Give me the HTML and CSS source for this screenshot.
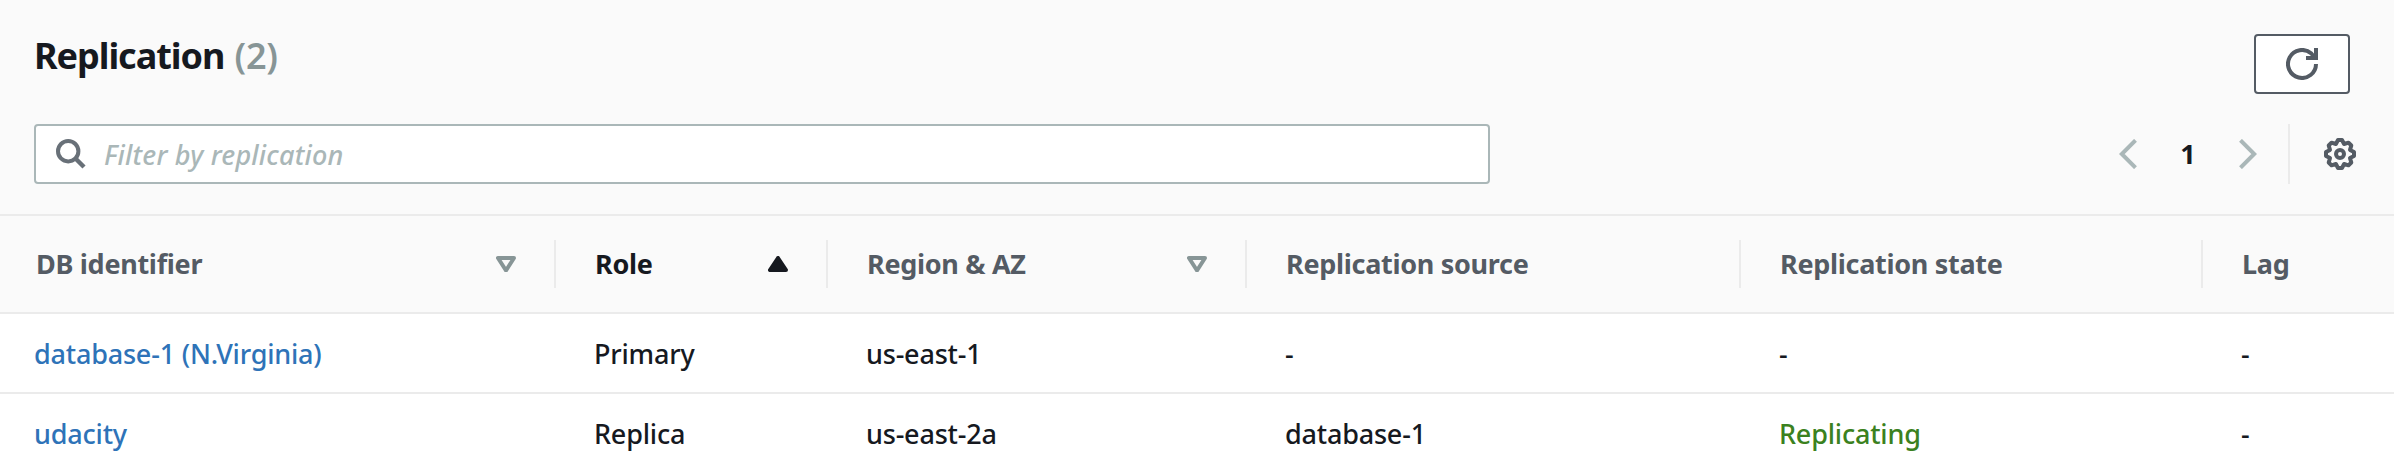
FILE: index.html
```html
<!DOCTYPE html>
<html lang="en">
<head>
<meta charset="utf-8">
<title>Replication</title>
<link rel="stylesheet" href="styles.css">
</head>
<body>
<section class="panel">
  <header class="panel-header">
    <div class="title-row">
      <h2 class="title"><span class="title-name">Replication</span> <span class="count">(2)</span></h2>
      <button class="refresh" aria-label="Refresh">
        <svg class="icon" viewBox="0 0 32 32"><path d="M30 16a14 14 0 1 1-4.6-10.4L29 10" fill="none" stroke="currentColor" stroke-width="4"/><path d="M30 0v10H20" fill="none" stroke="currentColor" stroke-width="4"/></svg>
      </button>
    </div>
    <div class="tools-row">
      <label class="search">
        <svg class="search-icon" viewBox="0 0 30 30"><circle cx="12.2" cy="12.2" r="10.2" fill="none" stroke="currentColor" stroke-width="4"/><path d="M19 19l9 9" stroke="currentColor" stroke-width="4.4"/></svg>
        <span class="placeholder">Filter by replication</span>
      </label>
      <div class="pager">
        <svg class="chevron" viewBox="0 0 18 30"><path d="M16.5 1.3L2.8 15l13.7 13.7" fill="none" stroke="currentColor" stroke-width="4"/></svg>
        <span class="page">1</span>
        <svg class="chevron" viewBox="0 0 18 30"><path d="M1.5 1.3L15.2 15 1.5 28.7" fill="none" stroke="currentColor" stroke-width="4"/></svg>
        <span class="settings">
          <svg class="icon" viewBox="0 0 32 32" fill="none" stroke="currentColor" stroke-width="4" stroke-linejoin="round"><path d="M14 2L18 2L20.100 6L24.500 4.700L27.300 7.500L26 11.900L30 14L30 18L26 20.100L27.300 24.500L24.500 27.300L20.100 26L18 30L14 30L11.900 26L7.500 27.300L4.700 24.500L6 20.100L2 18L2 14L6 11.900L4.700 7.500L7.500 4.700L11.900 6Z"/><circle cx="16" cy="16" r="4"/></svg>
        </span>
      </div>
    </div>
  </header>
  <div class="grid head">
    <div class="th"><span>DB identifier</span><svg class="sort" viewBox="0 0 20 16"><path d="M2 2h16l-8 12.500z"/></svg></div>
    <div class="th active"><span>Role</span><svg class="sort filled" viewBox="0 0 20 16"><path d="M2 14h16L10 2z"/></svg></div>
    <div class="th"><span>Region &amp; AZ</span><svg class="sort" viewBox="0 0 20 16"><path d="M2 2h16l-8 12.500z"/></svg></div>
    <div class="th"><span>Replication source</span></div>
    <div class="th"><span>Replication state</span></div>
    <div class="th"><span>Lag</span></div>
  </div>
  <div class="grid row">
    <div class="td"><a class="link">database-1 (N.Virginia)</a></div>
    <div class="td">Primary</div>
    <div class="td">us-east-1</div>
    <div class="td">-</div>
    <div class="td">-</div>
    <div class="td">-</div>
  </div>
  <div class="grid row">
    <div class="td"><a class="link">udacity</a></div>
    <div class="td">Replica</div>
    <div class="td">us-east-2a</div>
    <div class="td">database-1</div>
    <div class="td ok">Replicating</div>
    <div class="td">-</div>
  </div>
</section>
</body>
</html>
```
FILE: styles.css
```css
* { box-sizing: border-box; }
body {
  margin: 0;
  height: 470px;
  overflow: hidden;
  background: #fff;
  color: #16191f;
  font-family: "Noto Sans", "Open Sans", sans-serif;
  font-size: 27px;
  font-weight: 500;
  line-height: 40px;
}
svg { display: block; flex: none; }
.icon { width: 32px; height: 32px; }

.panel-header {
  height: 216px;
  padding: 34px 38px 0 34px;
  background: #fafafa;
  border-bottom: 2px solid #ebebeb;
}
.title-row, .tools-row { display: flex; justify-content: space-between; }
.title-row { height: 90px; padding-right: 6px; }
.title { margin: 0; font-size: 36px; line-height: 43px; letter-spacing: -1.05px; }
.count { margin-left: 2px; color: #879596; font-weight: 600; letter-spacing: -0.3px; }
.refresh {
  display: flex;
  justify-content: center;
  width: 96px;
  height: 60px;
  padding: 12px 0 0;
  background: #fff;
  border: 2px solid #545b64;
  border-radius: 4px;
  color: #545b64;
}
.search {
  display: flex;
  align-items: center;
  width: 1456px;
  height: 60px;
  padding-left: 20px;
  background: #fff;
  border: 2px solid #aab7b8;
  border-radius: 4px;
}
.search-icon { width: 30px; height: 30px; color: #687078; }
.placeholder { margin: 1px 0 0 18px; color: #aab7b8; font-style: italic; letter-spacing: 0.2px; }
.pager { display: flex; align-items: center; height: 60px; color: #aab7b8; }
.chevron { width: 18px; height: 30px; }
.page { width: 102px; text-align: center; color: #16191f; font-weight: 700; }
.settings {
  display: flex;
  align-items: center;
  height: 60px;
  margin-left: 31px;
  padding-left: 34px;
  border-left: 2px solid #ebebeb;
  color: #545b64;
}

.grid { display: grid; grid-template-columns: 556px 272px 419px 494px 462px 1fr; }
.head { height: 98px; padding-top: 24px; background: #fafafa; border-bottom: 2px solid #ebebeb; }
.th {
  display: flex;
  justify-content: space-between;
  height: 48px;
  padding: 0 38px 0 39px;
  border-right: 2px solid #ebebeb;
  color: #545b64;
  font-weight: 700;
  line-height: 48px;
  letter-spacing: -0.3px;
}
.th:first-child { padding-left: 36px; }
.th:last-child { border-right: 0; }
.active { color: #16191f; }
.sort { width: 20px; height: 16px; margin-top: 16px; fill: none; stroke: #879596; stroke-width: 4; stroke-linejoin: round; }
.filled { fill: #16191f; stroke: #16191f; }

.row { height: 80px; border-bottom: 2px solid #ebebeb; }
.td { padding: 20px 0 0 38px; letter-spacing: -0.2px; }
.td:first-child { padding-left: 34px; }
.link { color: #2e73b8; }
.ok { color: #3b8120; }
```
